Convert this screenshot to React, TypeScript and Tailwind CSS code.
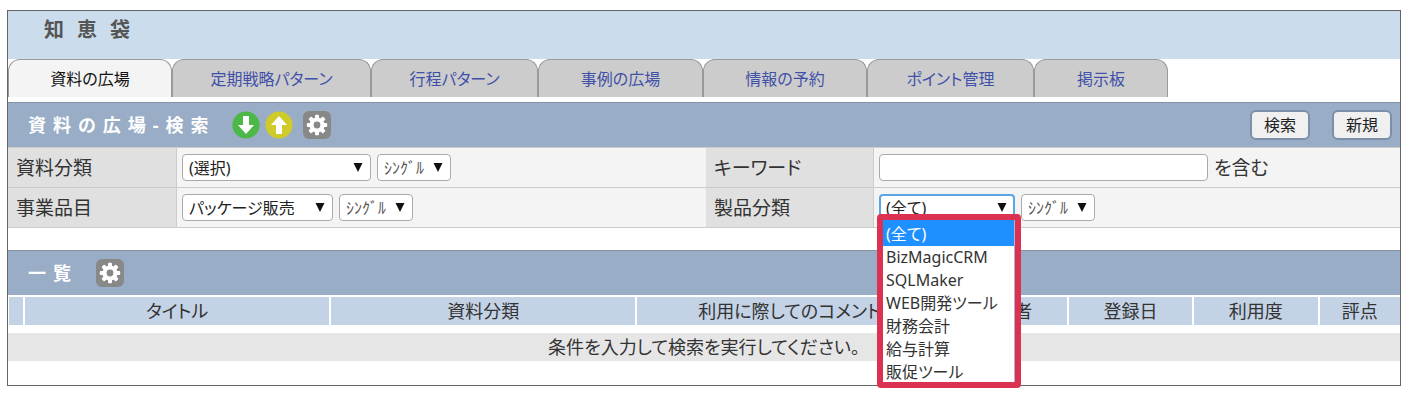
import { useState } from 'react';

const TABS = [
  { label: '資料の広場', width: 'w-[164px]' },
  { label: '定期戦略パターン', width: 'w-[199px]' },
  { label: '行程パターン', width: 'w-[167px]' },
  { label: '事例の広場', width: 'w-[165px]' },
  { label: '情報の予約', width: 'w-[164px]' },
  { label: 'ポイント管理', width: 'w-[167px]' },
  { label: '掲示板', width: 'w-[134px]' },
];

const PRODUCTS = [
  '(全て)',
  'BizMagicCRM',
  'SQLMaker',
  'WEB開発ツール',
  '財務会計',
  '給与計算',
  '販促ツール',
];

const COLUMNS = [
  { label: '', width: 'w-[15px]' },
  { label: 'タイトル', width: 'w-[22%]' },
  { label: '資料分類', width: 'w-[22%]' },
  { label: '利用に際してのコメント', width: 'w-[22%]' },
  { label: '登録者', width: 'w-[9%]' },
  { label: '登録日', width: 'w-[9%]' },
  { label: '利用度', width: 'w-[9%]' },
  { label: '評点', width: 'w-auto' },
];

function GearButton({ label }: { label: string }) {
  return (
    <button
      type="button"
      aria-label={label}
      className="flex h-7 w-7 items-center justify-center rounded-md bg-[#888]"
    >
      <svg viewBox="0 0 24 24" className="h-6 w-6">
        <g fill="#fff">
          <circle cx="12" cy="12" r="7.6" />
          {[0, 45, 90, 135].map((angle) => (
            <rect
              key={angle}
              x="10"
              y="1.8"
              width="4"
              height="20.4"
              rx="1"
              transform={`rotate(${angle} 12 12)`}
            />
          ))}
        </g>
        <circle cx="12" cy="12" r="3.4" fill="#888" />
      </svg>
    </button>
  );
}

function ArrowButton({ label, direction }: { label: string; direction: 'up' | 'down' }) {
  return (
    <button type="button" aria-label={label} className="h-7 w-7">
      <svg viewBox="0 0 28 28" className="h-7 w-7">
        <circle cx="14" cy="14" r="13.6" fill={direction === 'down' ? '#4cb848' : '#cfcb2b'} />
        <path
          d={
            direction === 'down'
              ? 'M11 5h6v9h5l-8 9-8-9h5z'
              : 'M11 23h6v-9h5l-8-9-8 9h5z'
          }
          fill="#fff"
        />
      </svg>
    </button>
  );
}

type SelectProps = {
  id?: string;
  label?: string;
  options: string[];
  width: string;
  open?: boolean;
  small?: boolean;
};

function Select({ id, label, options, width, open, small }: SelectProps) {
  return (
    <div className={`relative flex ${width}`}>
      <select
        id={id}
        aria-label={label}
        className={`h-[27px] w-full appearance-none rounded bg-white text-base leading-6 outline-none ${
          open ? 'border-2 border-[#5aa5e6] pl-[5px]' : 'border border-[#aaa] pl-1.5'
        } ${small ? 'text-[#555]' : 'text-[#222]'}`}
      >
        {options.map((option) => (
          <option key={option}>{option}</option>
        ))}
      </select>
      <svg
        viewBox="0 0 10 9"
        className="pointer-events-none absolute top-[9px] right-2 h-[9px] w-[10px]"
      >
        <path d="M0.5 0h9L5 9z" fill="#111" />
      </svg>
    </div>
  );
}

function ProductList() {
  const [selected, setSelected] = useState(PRODUCTS[0]);

  return (
    <div className="absolute top-5 -left-0.5 z-10 w-36 rounded border-[6px] border-[#dc3251] bg-white">
      <ul role="listbox" aria-label="製品分類" className="h-[162px] overflow-hidden border-r border-[#aab4d0]">
        {PRODUCTS.map((product) => (
          <li
            key={product}
            role="option"
            aria-selected={product === selected}
            onClick={() => setSelected(product)}
            className={`h-[23px] pl-[3px] text-base leading-[23px] whitespace-nowrap first:h-[26px] first:leading-7 ${
              product === selected ? 'bg-[#1e90ff] text-white' : 'text-[#333]'
            }`}
          >
            {product}
          </li>
        ))}
      </ul>
    </div>
  );
}

const labelCell = 'flex h-10 items-center border-b border-[#ccc] bg-[#e0e0e0] pl-2';
const valueCell = 'flex h-10 items-center gap-1.5 border-b border-l border-[#ccc] bg-[#f4f4f4] pl-[5px]';
const bar = 'flex h-[45px] items-center border-t border-[#8291a3] bg-[#99adc6] pl-5';
const barTitle = 'text-lg font-bold tracking-[7px] text-white';
const barButton =
  'h-[30px] w-[60px] rounded-md border-2 border-[#7b90a8] bg-[#f0f0f0] text-base leading-6 text-[#222]';

export default function App() {
  const [activeTab, setActiveTab] = useState(TABS[0].label);

  return (
    <div className="bg-white pt-2.5 pr-[13px] pb-6 pl-[7px] font-['Noto_Sans','Noto_Sans_CJK_JP',sans-serif] [font-feature-settings:'palt']">
      <div className="border border-[#666] text-[19px] leading-7 text-[#333]">
        <header className="h-12 bg-[#cbdded] pt-[5px] pl-9">
          <h1 className="text-xl font-bold tracking-[13px] text-[#555]">知恵袋</h1>
        </header>

        {/* Tabs */}
        <nav className="flex">
          {TABS.map((tab) => (
            <button
              key={tab.label}
              type="button"
              onClick={() => setActiveTab(tab.label)}
              className={`h-[38px] rounded-t-xl border border-b-0 border-[#999] text-base ${tab.width} ${
                tab.label === activeTab ? 'bg-[#f4f4f4] text-[#111]' : 'bg-[#ccc] text-[#3f51a8]'
              }`}
            >
              {tab.label}
            </button>
          ))}
        </nav>

        {/* Search form */}
        <section className="mt-[5px]">
          <div className={bar}>
            <h2 className={barTitle}>資料の広場-検索</h2>
            <div className="ml-4 flex gap-[5px]">
              <ArrowButton label="開く" direction="down" />
              <ArrowButton label="閉じる" direction="up" />
            </div>
            <div className="ml-2.5">
              <GearButton label="検索の設定" />
            </div>
            <div className="mr-2 ml-auto flex gap-[22px]">
              <button type="button" className={barButton}>検索</button>
              <button type="button" className={barButton}>新規</button>
            </div>
          </div>
          <form className="grid grid-cols-[168px_530fr_167px_527fr] border-t border-[#ccc]">
            <label htmlFor="category" className={labelCell}>資料分類</label>
            <div className={valueCell}>
              <Select id="category" options={['(選択)']} width="w-[189px]" />
              <Select label="資料分類の選択方法" options={['ｼﾝｸﾞﾙ']} width="w-[74px]" small />
            </div>
            <label htmlFor="keyword" className={labelCell}>キーワード</label>
            <div className={valueCell}>
              <input
                id="keyword"
                type="text"
                className="h-[27px] w-[329px] rounded border border-[#aaa] bg-white px-1.5 text-base"
              />
              <span>を含む</span>
            </div>
            <label htmlFor="item" className={labelCell}>事業品目</label>
            <div className={valueCell}>
              <Select id="item" options={['パッケージ販売']} width="w-[151px]" />
              <Select label="事業品目の選択方法" options={['ｼﾝｸﾞﾙ']} width="w-[74px]" small />
            </div>
            <label htmlFor="product" className={labelCell}>製品分類</label>
            <div className={valueCell}>
              <div className="relative">
                <Select id="product" options={PRODUCTS} width="w-[136px]" open />
                <ProductList />
              </div>
              <Select label="製品分類の選択方法" options={['ｼﾝｸﾞﾙ']} width="w-[74px]" small />
            </div>
          </form>
        </section>

        {/* Result list */}
        <section className="mt-[22px] pb-6">
          <div className={bar}>
            <h2 className={barTitle}>一覧</h2>
            <div className="ml-[18px]">
              <GearButton label="一覧の設定" />
            </div>
          </div>
          <table className="w-full table-fixed border-separate border-spacing-0 text-lg leading-7">
            <thead>
              <tr>
                {COLUMNS.map((column) => (
                  <th
                    key={column.label}
                    scope="col"
                    className={`h-[30px] border-t-2 border-l-2 border-white bg-[#c4d2e5] p-0 font-normal whitespace-nowrap first:border-l ${column.width}`}
                  >
                    {column.label}
                  </th>
                ))}
              </tr>
            </thead>
            <tbody>
              <tr>
                <td
                  colSpan={COLUMNS.length}
                  className="border-t-8 border-white bg-[#e6e6e6] p-0 text-center"
                >
                  条件を入力して検索を実行してください。
                </td>
              </tr>
            </tbody>
          </table>
        </section>
      </div>
    </div>
  );
}
